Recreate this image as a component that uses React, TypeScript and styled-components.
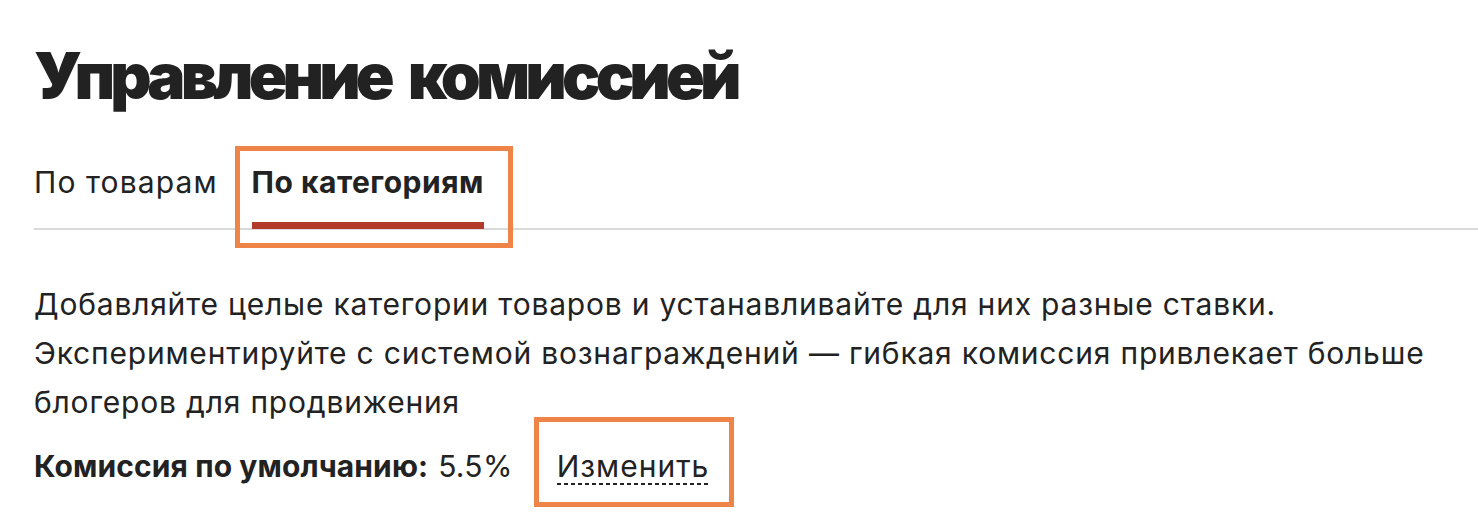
import styled, { createGlobalStyle } from "styled-components";

const GlobalStyle = createGlobalStyle`
  html, body {
    margin: 0;
    background: #ffffff;
    color: #222222;
    font-family: Inter, "Liberation Sans", sans-serif;
  }
`;

const Page = styled.div`
  box-sizing: border-box;
  min-height: 528px;
  padding: 44px 0 0 34px;
`;

const Title = styled.h1`
  margin: 0;
  font-size: 64px;
  line-height: 64px;
  font-weight: 900;
  letter-spacing: -4.9px;
  word-spacing: 10px;
  color: #222222;
`;

const TabBar = styled.div`
  display: flex;
  gap: 34px;
  margin-top: 56px;
  border-bottom: 2px solid #dadada;
`;

const Tab = styled.div<{ $active?: boolean }>`
  position: relative;
  font-size: 30px;
  line-height: 36px;
  font-weight: ${(p) => (p.$active ? 700 : 400)};
  letter-spacing: ${(p) => (p.$active ? "0.5px" : "1.1px")};
  padding-bottom: 22px;
  margin-bottom: -1px;
  border-bottom: 7px solid ${(p) => (p.$active ? "#b23a2a" : "transparent")};
  color: #222222;
`;

const Highlight = styled.span<{ $t: number; $r: number; $b: number; $l: number }>`
  position: absolute;
  top: ${(p) => p.$t}px;
  right: ${(p) => p.$r}px;
  bottom: ${(p) => p.$b}px;
  left: ${(p) => p.$l}px;
  border: 5px solid #ef8448;
  pointer-events: none;
`;

const Description = styled.p`
  margin: 50px 0 0;
  font-size: 30px;
  line-height: 49px;
  max-width: 1400px;
  letter-spacing: 0.8px;
`;

const CommissionRow = styled.div`
  display: flex;
  align-items: baseline;
  margin-top: 19px;
  font-size: 30px;
  line-height: 40px;
  letter-spacing: 0.3px;
`;

const Label = styled.b`
  font-weight: 700;
  letter-spacing: 0.1px;
  margin-right: 10px;
`;

const EditWrap = styled.span`
  position: relative;
  margin-left: 44px;
`;

const EditLink = styled.a`
  position: relative;
  display: inline-block;
  font-size: 30px;
  line-height: 40px;
  letter-spacing: 1px;
  color: #222222;
  text-decoration: none;
  cursor: pointer;

  &::after {
    content: "";
    position: absolute;
    left: 0;
    right: 0;
    bottom: 1px;
    height: 2px;
    background-image: repeating-linear-gradient(
      to right,
      #222222 0 4px,
      transparent 4px 7px
    );
  }
`;

export default function App() {
  return (
    <>
      <GlobalStyle />
      <Page>
        <Title>Управление комиссией</Title>
        <TabBar>
          <Tab>По товарам</Tab>
          <Tab $active>
            По категориям
            <Highlight $t={-18} $r={-29} $b={-26} $l={-17} />
          </Tab>
        </TabBar>
        <Description>
          Добавляйте целые категории товаров и устанавливайте для них разные ставки.
          <br />
          Экспериментируйте с системой вознаграждений — гибкая комиссия привлекает больше
          блогеров для продвижения
        </Description>
        <CommissionRow>
          <Label>Комиссия по умолчанию:</Label>
          <span>5.5%</span>
          <EditWrap>
            <EditLink>Изменить</EditLink>
            <Highlight $t={-29} $r={-25} $b={-21} $l={-23} />
          </EditWrap>
        </CommissionRow>
      </Page>
    </>
  );
}
